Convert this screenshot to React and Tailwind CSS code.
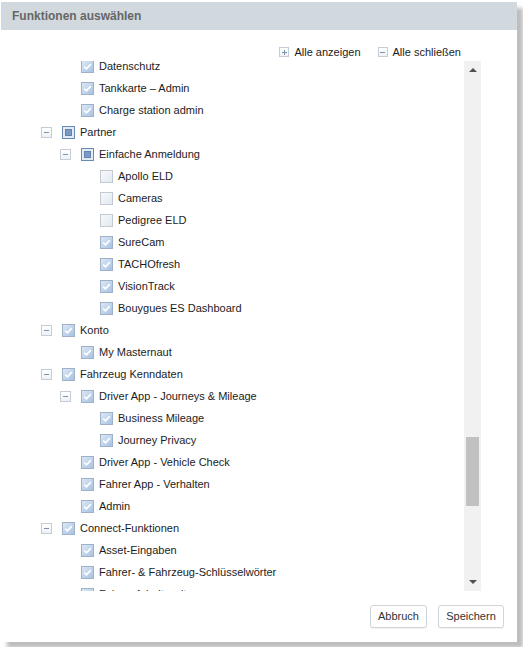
import React from "react";

const rows = [
  { l: 1, t: "Datenschutz", s: "c" },
  { l: 1, t: "Tankkarte – Admin", s: "c" },
  { l: 1, t: "Charge station admin", s: "c" },
  { l: 0, t: "Partner", s: "p", e: true },
  { l: 1, t: "Einfache Anmeldung", s: "p", e: true },
  { l: 2, t: "Apollo ELD", s: "u" },
  { l: 2, t: "Cameras", s: "u" },
  { l: 2, t: "Pedigree ELD", s: "u" },
  { l: 2, t: "SureCam", s: "c" },
  { l: 2, t: "TACHOfresh", s: "c" },
  { l: 2, t: "VisionTrack", s: "c" },
  { l: 2, t: "Bouygues ES Dashboard", s: "c" },
  { l: 0, t: "Konto", s: "c", e: true },
  { l: 1, t: "My Masternaut", s: "c" },
  { l: 0, t: "Fahrzeug Kenndaten", s: "c", e: true },
  { l: 1, t: "Driver App - Journeys & Mileage", s: "c", e: true },
  { l: 2, t: "Business Mileage", s: "c" },
  { l: 2, t: "Journey Privacy", s: "c" },
  { l: 1, t: "Driver App - Vehicle Check", s: "c" },
  { l: 1, t: "Fahrer App - Verhalten", s: "c" },
  { l: 1, t: "Admin", s: "c" },
  { l: 0, t: "Connect-Funktionen", s: "c", e: true },
  { l: 1, t: "Asset-Eingaben", s: "c" },
  { l: 1, t: "Fahrer- & Fahrzeug-Schlüsselwörter", s: "c" },
  { l: 1, t: "Fahrer-Arbeitszeiten", s: "c" },
];

function Expander({ plus, size = "w-[11px] h-[11px]" }) {
  return (
    <span className={`${size} flex items-center justify-center border border-[#c3ccd7] bg-gradient-to-b from-white to-[#eef2f6] shrink-0 relative`}>
      <span className="w-[5px] h-px bg-[#7d92ad]" />
      {plus && <span className="absolute w-px h-[5px] bg-[#7d92ad]" />}
    </span>
  );
}

function Check({ s }) {
  if (s === "p") {
    return (
      <span className="w-[13px] h-[13px] shrink-0 border border-[#6a8ab3] bg-[#e2eaf4] flex items-center justify-center">
        <span className="w-[7px] h-[7px] bg-[#7b9ac3] border border-[#6384ae]" />
      </span>
    );
  }
  if (s === "u") {
    return (
      <span className="w-[13px] h-[13px] shrink-0 border border-[#c3cad3] bg-gradient-to-br from-[#f7f9fb] to-[#e3e9ef]" />
    );
  }
  return (
    <span className="w-[13px] h-[13px] shrink-0 border border-[#9fb1c7] bg-gradient-to-br from-[#dce8f5] to-[#a8c2e2] flex items-center justify-center">
      <svg width="11" height="11" viewBox="0 0 11 11">
        <path d="M2.2 5.6 L4.5 7.8 L8.8 3.2" fill="none" stroke="#ffffff" strokeWidth="1.7" />
      </svg>
    </span>
  );
}

function Row({ r }) {
  const pad = ["pl-[20px]", "pl-[39px]", "pl-[58px]"][r.l];
  return (
    <div className={`h-[22px] flex items-center ${pad}`}>
      <span className="w-[21px] shrink-0 flex items-center">{r.e && <Expander />}</span>
      <Check s={r.s} />
      <span className="ml-[5px] text-[11px] text-[#1c1c1c] whitespace-nowrap leading-none">{r.t}</span>
    </div>
  );
}

export default function App() {
  return (
    <div className="w-[523px] h-[647px] bg-white pt-[2px] pl-[1px] overflow-hidden" style={{ fontFamily: '"Liberation Sans", Arial, sans-serif' }}>
      <div className="w-[516px] h-[640px] bg-white flex flex-col shadow-[6px_6px_4px_#bdbdbd]">
        <div className="h-[28px] shrink-0 bg-[#d1d9df] pl-[11px] flex items-center font-bold text-[12px] text-[#666666]">
          Funktionen auswählen
        </div>
        <div className="h-[31px] shrink-0 pt-[14px]">
          <div className="h-[16px] flex items-center justify-end pr-[56px] text-[11px] text-[#1c1c1c]">
            <Expander plus size="w-[10px] h-[10px]" />
            <span className="ml-[5px]">Alle anzeigen</span>
            <span className="ml-[17px]"><Expander size="w-[10px] h-[10px]" /></span>
            <span className="ml-[5px]">Alle schließen</span>
          </div>
        </div>
        <div className="h-[530px] shrink-0 flex ml-[20px] w-[460px]">
          <div className="flex-1 overflow-hidden">
            <div className="-mt-[6px]">
              {rows.map((r, i) => (
                <Row key={i} r={r} />
              ))}
            </div>
          </div>
          <div className="w-[17px] shrink-0 bg-[#f1f1f1] flex flex-col">
            <div className="h-[17px] flex items-center justify-center">
              <svg width="8" height="5" viewBox="0 0 8 5"><path d="M0 5 L4 1 L8 5 Z" fill="#505050" /></svg>
            </div>
            <div className="flex-1">
              <div className="mt-[359px] h-[69px] mx-[2px] bg-[#c1c1c1]" />
            </div>
            <div className="h-[17px] flex items-center justify-center">
              <svg width="8" height="5" viewBox="0 0 8 5"><path d="M0 0 L8 0 L4 4 Z" fill="#505050" /></svg>
            </div>
          </div>
        </div>
        <div className="flex justify-end pr-[13px] pt-[14px] gap-[11px]">
          <button className="w-[57px] h-[23px] border border-[#cfd5db] rounded-[3px] bg-white text-[11px] text-[#333333] shadow-[0_1px_1px_rgba(0,0,0,0.06)]">Abbruch</button>
          <button className="w-[66px] h-[23px] border border-[#cfd5db] rounded-[3px] bg-white text-[11px] text-[#333333] shadow-[0_1px_1px_rgba(0,0,0,0.06)]">Speichern</button>
        </div>
      </div>
    </div>
  );
}
